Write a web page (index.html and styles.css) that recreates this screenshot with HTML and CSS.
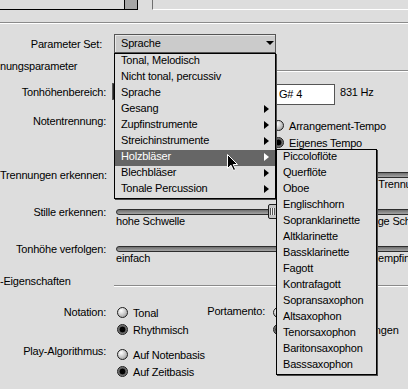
FILE: index.html
```html
<!DOCTYPE html>
<html lang="de">
<head>
    <meta charset="UTF-8">
    <title>Parameter Set</title>
    <link rel="stylesheet" href="styles.css">
</head>
<body>
<div class="top">
    <div class="list"></div>
    <div class="scroll"></div>
    <div class="pane"></div>
</div>
<div class="rule"></div>

<div class="param">
    <span class="lbl">Parameter Set:</span>
    <div class="popup">
        <div class="popup-btn">Sprache<i class="down"></i></div>
        <ul class="menu">
            <li>Tonal, Melodisch</li>
            <li>Nicht tonal, percussiv</li>
            <li>Sprache</li>
            <li class="sub">Gesang</li>
            <li class="sub">Zupfinstrumente</li>
            <li class="sub">Streichinstrumente</li>
            <li class="sub on">Holzbläser
                <ul class="menu submenu">
                    <li>Piccoloflöte</li>
                    <li>Querflöte</li>
                    <li>Oboe</li>
                    <li>Englischhorn</li>
                    <li>Sopranklarinette</li>
                    <li>Altklarinette</li>
                    <li>Bassklarinette</li>
                    <li>Fagott</li>
                    <li>Kontrafagott</li>
                    <li>Sopransaxophon</li>
                    <li>Altsaxophon</li>
                    <li>Tenorsaxophon</li>
                    <li>Baritonsaxophon</li>
                    <li>Basssaxophon</li>
                </ul>
            </li>
            <li class="sub">Blechbläser</li>
            <li class="sub">Tonale Percussion</li>
        </ul>
    </div>
</div>

<div class="group"><span>nungsparameter</span><div class="line"></div></div>

<div class="row pitch">
    <span class="lbl">Tonhöhenbereich:</span>
    <div><div class="field short">C 2</div></div>
    <div class="ctl">
        <div class="field">G# 4</div>
        <span class="hz">831 Hz</span>
    </div>
</div>

<div class="row split">
    <span class="lbl">Notentrennung:</span>
    <div></div>
    <div class="radios">
        <div class="radio">Arrangement-Tempo</div>
        <div class="radio on">Eigenes Tempo</div>
    </div>
</div>

<div class="row slide first">
    <span class="lbl">Trennungen erkennen:</span>
    <div class="slider">
        <div class="track"></div>
        <div class="scale"><span>wenige Trennungen</span><span style="margin-left:-24px">viele Trennungen</span></div>
    </div>
</div>

<div class="row slide">
    <span class="lbl">Stille erkennen:</span>
    <div class="slider">
        <div class="track"><i class="thumb" style="left:151px"></i></div>
        <div class="scale"><span>hohe Schwelle</span><span style="margin-left:-26px">niedrige Schwelle</span></div>
    </div>
</div>

<div class="row slide">
    <span class="lbl">Tonhöhe verfolgen:</span>
    <div class="slider">
        <div class="track"></div>
        <div class="scale"><span>einfach</span><span>empfindlich</span></div>
    </div>
</div>

<div class="group second"><span>-Eigenschaften</span><div class="line"></div></div>

<div class="row notation">
    <span class="lbl">Notation:</span>
    <div class="pair">
        <div class="radios">
            <div class="radio">Tonal</div>
            <div class="radio on">Rhythmisch</div>
        </div>
        <span class="lbl porta">Portamento:</span>
    </div>
    <div class="radios">
        <div class="radio">Aus</div>
        <div class="radio on">Nur bei Überbindungen</div>
    </div>
</div>

<div class="row play">
    <span class="lbl">Play-Algorithmus:</span>
    <div class="radios">
        <div class="radio">Auf Notenbasis</div>
        <div class="radio on">Auf Zeitbasis</div>
    </div>
</div>

<svg class="cursor" width="12" height="18" viewBox="0 0 12 18">
    <path d="M0.5,0.5 V14.5 L4,11.2 L6.5,16.5 L8.6,15.5 L6.2,10.5 H10.5 Z" fill="#000" stroke="#fff" stroke-width="1"/>
</svg>
</body>
</html>
```

FILE: styles.css
```css
body{
    margin: 0;
    width: 408px;
    height: 389px;
    overflow: hidden;
    position: relative;
    background: #dddddd;
    color: #000;
    font: 11px/16px "Liberation Sans", Arial, sans-serif;
    letter-spacing: -.2px;
}

/* leiste oben */
.top{
    display: flex;
    height: 10px;
}
.list{
    width: 124px;
    height: 9px;
    border-bottom: 1px solid #000;
}
.scroll{
    width: 12px;
    height: 9px;
    background: #a6a6a6;
    border: 1px solid #000;
    border-top: 0;
}
.pane{
    flex: 1;
    height: 9px;
    margin-left: 14px;
    border-left: 1px solid #6f6f6f;
    border-bottom: 1px solid #fff;
}
.rule{
    margin-top: 12px;
    border-top: 1px solid #8a8a8a;
    border-bottom: 1px solid #fff;
}

.lbl{
    text-align: right;
    line-height: 16px;
    white-space: nowrap;
}

/* popup */
.param{
    display: flex;
    align-items: center;
    height: 19px;
    margin-top: 10px;
}
.param .lbl{
    width: 102px;
    margin-right: 12px;
}
.popup{
    position: relative;
    width: 162px;
    z-index: 5;
}
.popup-btn{
    display: flex;
    height: 17px;
    line-height: 17px;
    padding-left: 6px;
    border: 1px solid #555;
    background: #cbcbcb;
    box-shadow: inset 1px 1px 0 #e8e8e8;
}
.down{
    margin: 6px 1px 0 auto;
    width: 0;
    height: 0;
    border-left: 4px solid transparent;
    border-right: 4px solid transparent;
    border-top: 4px solid #000;
}
.menu{
    position: absolute;
    top: 19px;
    left: 0;
    width: 160px;
    margin: 0;
    padding: 0;
    list-style: none;
    background: #dddddd;
    border: 1px solid #000;
    box-shadow: 1px 1px 0 #4a4a4a;
}
.menu li{
    position: relative;
    display: flex;
    box-sizing: border-box;
    height: 16px;
    line-height: 13px;
    padding: 0 6px 3px;
    white-space: nowrap;
}
.menu li.sub::after{
    content: '';
    margin: 3px 0 0 auto;
    width: 0;
    height: 0;
    border-left: 5px solid #000;
    border-top: 4px solid transparent;
    border-bottom: 4px solid transparent;
}
.menu li.on{
    background: #666;
    color: #fff;
}
.menu li.on::after{
    border-left-color: #fff;
}
.submenu{
    top: -1px;
    left: 161px;
    width: 99px;
    color: #000;
}

/* gruppen */
.group{
    display: flex;
    height: 16px;
    margin-top: 5px;
}
.group span{
    width: 114px;
    flex: none;
    white-space: nowrap;
}
.group .line{
    flex: 1;
    margin-top: 12px;
    height: 0;
    border-top: 1px solid #8a8a8a;
    border-bottom: 1px solid #fff;
}
.group.second{
    margin-top: 8px;
}

.row{
    display: grid;
    grid-template-columns: 106px 151px auto;
    column-gap: 8px;
    align-items: start;
}

/* felder */
.pitch{
    margin-top: 10px;
}
.field{
    width: 55px;
    height: 19px;
    line-height: 19px;
    padding-left: 2px;
    background: #fff;
    border: 1px solid #555;
}
.field.short{
    height: 15px;
    line-height: 15px;
    margin: -1px 0 0 -2px;
    box-shadow: inset 1px 0 0 #222;
}
.ctl{
    display: flex;
    margin-left: 3px;
}
.hz{
    margin-left: 5px;
}

/* radios */
.radios{
    display: flex;
    flex-direction: column;
}
.radio{
    display: flex;
    align-items: center;
    height: 17px;
    white-space: nowrap;
}
.radio::before{
    content: '';
    flex: none;
    box-sizing: border-box;
    width: 11px;
    height: 11px;
    margin-right: 5px;
    border: 1px solid #1e1e1e;
    border-radius: 50%;
    background: radial-gradient(circle at 35% 30%, #fff 0, #dadada 35%, #8e8e8e 100%);
}
.radio.on::before{
    background: radial-gradient(circle, #000 0 2.6px, #5a5a5a 3.2px, #b0b0b0 100%);
}
.split{
    margin-top: 8px;
}
.split .radios{
    margin-top: 4px;
}

/* regler */
.slide{
    margin-top: 13px;
}
.slide.first{
    margin-top: 16px;
}
.slider{
    grid-column: 2 / 4;
    margin: 5px 0 0 2px;
    width: 330px;
}
.track{
    position: relative;
    height: 4px;
    border: 1px solid #2d2d2d;
    border-radius: 3px;
    background: linear-gradient(#6f6f6f, #a5a5a5);
}
.thumb{
    position: absolute;
    top: -6px;
    width: 8px;
    height: 13px;
    border: 1px solid #1e1e1e;
    border-radius: 2px;
    background: linear-gradient(90deg, transparent 1px, #555 1px 2px, #f0f0f0 2px 3px, #555 3px 4px, #f0f0f0 4px 5px, #555 5px 6px, transparent 6px) center / 100% 7px no-repeat, #c4c4c4;
}
.scale{
    display: grid;
    grid-template-columns: 262px auto;
    line-height: 13px;
    white-space: nowrap;
}

/* eigenschaften */
.notation{
    margin-top: 15px;
}
.pair{
    display: flex;
    justify-content: space-between;
    padding-left: 3px;
}
.porta{
    margin-top: -1px;
}
.play{
    margin-top: 5px;
}
.play .radios{
    margin: 3px 0 0 3px;
}

.cursor{
    position: absolute;
    left: 227px;
    top: 154px;
    z-index: 10;
}
```
